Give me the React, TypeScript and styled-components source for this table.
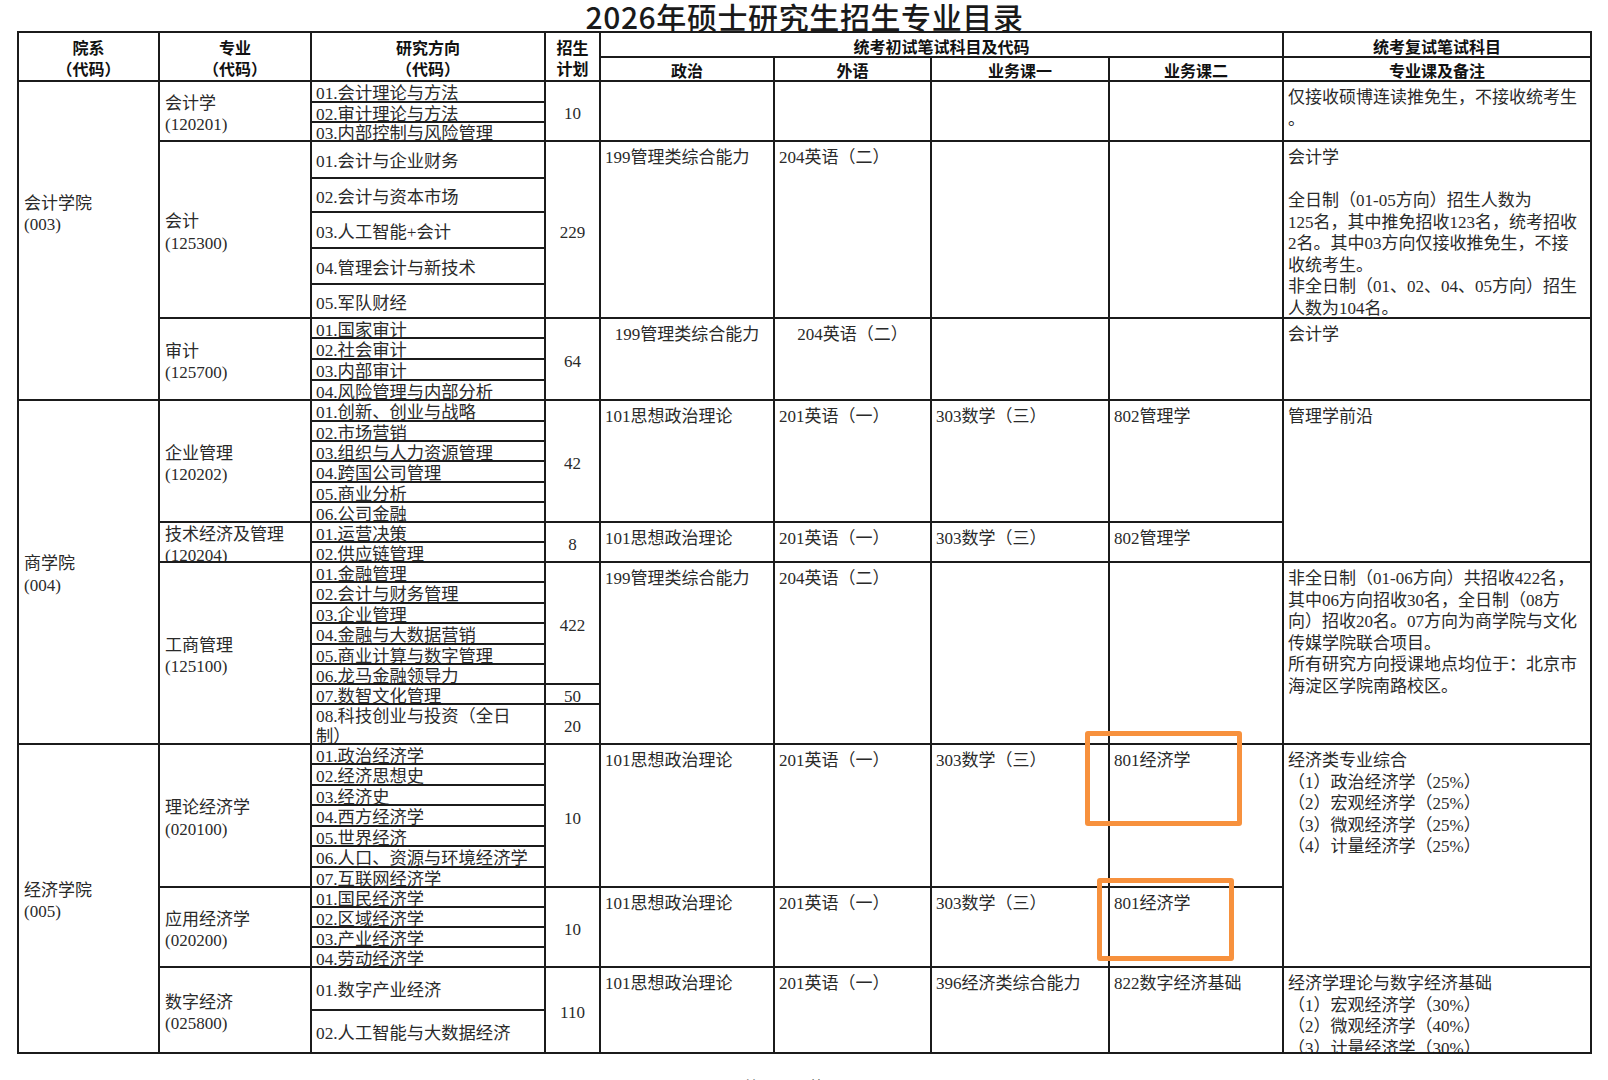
import React from 'react';
import styled, { createGlobalStyle } from 'styled-components';

const LINE = '#1b1b1b';
const TEXT = '#2a2a2a';
const COLS = [141, 152, 234, 55, 174, 157, 178, 174, 308];

const GlobalStyle = createGlobalStyle`
  html, body { margin: 0; padding: 0; background: #ffffff; }
  body {
    font-family: "Liberation Serif", "Noto Sans CJK SC", serif;
    color: ${TEXT};
    overflow: hidden;
  }
`;

type Dir = { text: string; h: number };
type Plan = { n: string; rows: number };
type Note = { lines: string[]; majors: number };
type Major = {
  name: string;
  code: string;
  dirs: Dir[];
  plans: Plan[];
  subjects: string[];
  subjectsCenter?: boolean;
  note?: Note;
};
type Dept = { name: string; code: string; lift?: number; majors: Major[] };

const d = (texts: string[], hs: number[]): Dir[] => texts.map((t, i) => ({ text: t, h: hs[i] }));

const MGMT = ['199管理类综合能力', '204英语（二）', '', ''];
const BIZ = ['101思想政治理论', '201英语（一）', '303数学（三）', '802管理学'];
const ECON = ['101思想政治理论', '201英语（一）', '303数学（三）', '801经济学'];

const DEPTS: Dept[] = [
  {
    name: '会计学院',
    code: '(003)',
    lift: 58,
    majors: [
      {
        name: '会计学',
        code: '(120201)',
        dirs: d(['01.会计理论与方法', '02.审计理论与方法', '03.内部控制与风险管理'], [21, 20, 19]),
        plans: [{ n: '10', rows: 3 }],
        subjects: ['', '', '', ''],
        note: { lines: ['仅接收硕博连读推免生，不接收统考生', '。'], majors: 1 },
      },
      {
        name: '会计',
        code: '(125300)',
        dirs: d(
          ['01.会计与企业财务', '02.会计与资本市场', '03.人工智能+会计', '04.管理会计与新技术', '05.军队财经'],
          [37, 34, 36, 36, 34]
        ),
        plans: [{ n: '229', rows: 5 }],
        subjects: MGMT,
        note: {
          lines: [
            '会计学',
            '',
            '全日制（01-05方向）招生人数为',
            '125名，其中推免招收123名，统考招收',
            '2名。其中03方向仅接收推免生，不接',
            '收统考生。',
            '非全日制（01、02、04、05方向）招生',
            '人数为104名。',
          ],
          majors: 1,
        },
      },
      {
        name: '审计',
        code: '(125700)',
        dirs: d(['01.国家审计', '02.社会审计', '03.内部审计', '04.风险管理与内部分析'], [20, 21, 21, 20]),
        plans: [{ n: '64', rows: 4 }],
        subjects: MGMT,
        subjectsCenter: true,
        note: { lines: ['会计学'], majors: 1 },
      },
    ],
  },
  {
    name: '商学院',
    code: '(004)',
    majors: [
      {
        name: '企业管理',
        code: '(120202)',
        dirs: d(
          ['01.创新、创业与战略', '02.市场营销', '03.组织与人力资源管理', '04.跨国公司管理', '05.商业分析', '06.公司金融'],
          [21, 20, 20, 21, 20, 20]
        ),
        plans: [{ n: '42', rows: 6 }],
        subjects: BIZ,
        note: { lines: ['管理学前沿'], majors: 2 },
      },
      {
        name: '技术经济及管理',
        code: '(120204)',
        dirs: d(['01.运营决策', '02.供应链管理'], [20, 20]),
        plans: [{ n: '8', rows: 2 }],
        subjects: BIZ,
      },
      {
        name: '工商管理',
        code: '(125100)',
        dirs: d(
          [
            '01.金融管理',
            '02.会计与财务管理',
            '03.企业管理',
            '04.金融与大数据营销',
            '05.商业计算与数字管理',
            '06.龙马金融领导力',
            '07.数智文化管理',
            '08.科技创业与投资（全日\n制）',
          ],
          [20, 21, 20, 21, 20, 20, 20, 40]
        ),
        plans: [
          { n: '422', rows: 6 },
          { n: '50', rows: 1 },
          { n: '20', rows: 1 },
        ],
        subjects: MGMT,
        note: {
          lines: [
            '非全日制（01-06方向）共招收422名，',
            '其中06方向招收30名，全日制（08方',
            '向）招收20名。07方向为商学院与文化',
            '传媒学院联合项目。',
            '所有研究方向授课地点均位于：北京市',
            '海淀区学院南路校区。',
          ],
          majors: 1,
        },
      },
    ],
  },
  {
    name: '经济学院',
    code: '(005)',
    majors: [
      {
        name: '理论经济学',
        code: '(020100)',
        dirs: d(
          ['01.政治经济学', '02.经济思想史', '03.经济史', '04.西方经济学', '05.世界经济', '06.人口、资源与环境经济学', '07.互联网经济学'],
          [20, 21, 20, 21, 20, 21, 20]
        ),
        plans: [{ n: '10', rows: 7 }],
        subjects: ECON,
        note: {
          lines: ['经济类专业综合', '（1）政治经济学（25%）', '（2）宏观经济学（25%）', '（3）微观经济学（25%）', '（4）计量经济学（25%）'],
          majors: 2,
        },
      },
      {
        name: '应用经济学',
        code: '(020200)',
        dirs: d(['01.国民经济学', '02.区域经济学', '03.产业经济学', '04.劳动经济学'], [20, 20, 20, 20]),
        plans: [{ n: '10', rows: 4 }],
        subjects: ECON,
      },
      {
        name: '数字经济',
        code: '(025800)',
        dirs: d(['01.数字产业经济', '02.人工智能与大数据经济'], [43, 43]),
        plans: [{ n: '110', rows: 2 }],
        subjects: ['101思想政治理论', '201英语（一）', '396经济类综合能力', '822数字经济基础'],
        note: {
          lines: ['经济学理论与数字经济基础', '（1）宏观经济学（30%）', '（2）微观经济学（40%）', '（3）计量经济学（30%）'],
          majors: 1,
        },
      },
    ],
  },
];

/* ---------- styled parts ---------- */

const Page = styled.div`
  position: relative;
  width: 1608px;
  height: 1080px;
  padding-left: 17px;
  box-sizing: border-box;
`;

const Title = styled.h1`
  width: 1575px;
  height: 31px;
  margin: 0;
  font-family: "Noto Sans CJK SC", sans-serif;
  font-weight: 500;
  font-size: 30px;
  line-height: 32px;
  letter-spacing: 0.6px;
  color: #1a1a1a;
  text-align: center;
  white-space: nowrap;
`;

const Grid = styled.div<{ $rows: string }>`
  display: grid;
  grid-template-columns: ${COLS.map((c) => `${c}px`).join(' ')};
  grid-template-rows: ${(p) => p.$rows};
  width: max-content;
  border-top: 2px solid ${LINE};
  border-left: 2px solid ${LINE};
`;

const Cell = styled.div<{ $c: number; $cs?: number; $r: number; $rs?: number }>`
  grid-column: ${(p) => p.$c} / span ${(p) => p.$cs ?? 1};
  grid-row: ${(p) => p.$r} / span ${(p) => p.$rs ?? 1};
  border-right: 2px solid ${LINE};
  border-bottom: 2px solid ${LINE};
  box-sizing: border-box;
  overflow: hidden;
  min-width: 0;
  min-height: 0;
  font-size: 17px;
`;

const HeadCell = styled(Cell)`
  display: flex;
  flex-direction: column;
  align-items: center;
  justify-content: center;
  padding-top: 3px;
  font-family: "Noto Sans CJK SC", sans-serif;
  font-weight: 700;
  font-size: 16px;
  line-height: 21px;
  color: #111;
  white-space: nowrap;
`;

const DeptCell = styled(Cell)<{ $lift?: number }>`
  display: flex;
  flex-direction: column;
  justify-content: center;
  padding: 5px 5px ${(p) => p.$lift ?? 0}px;
  line-height: 21.5px;
`;

const MajorCell = styled(Cell)`
  display: flex;
  flex-direction: column;
  justify-content: center;
  padding: 6px 5px 0;
  line-height: 21.5px;
  white-space: nowrap;
`;

const DirCell = styled(Cell)`
  display: flex;
  align-items: center;
  padding: 5px 4px 0;
  line-height: 20px;
  font-size: 17.3px;
  white-space: pre-line;
`;

const PlanCell = styled(Cell)`
  display: flex;
  align-items: center;
  justify-content: center;
  padding-top: 6px;
  line-height: 20px;
`;

const SubjectCell = styled(Cell)<{ $center?: boolean }>`
  padding: 5px 4px 0;
  line-height: 21.5px;
  white-space: nowrap;
  text-align: ${(p) => (p.$center ? 'center' : 'left')};
`;

const NoteCell = styled(Cell)`
  padding: 5px 4px 0;
  line-height: 21.5px;
`;

const NoteLine = styled.div`
  min-height: 21.5px;
  white-space: nowrap;
`;

const Mark = styled.div<{ $x: number; $y: number; $w: number; $h: number }>`
  position: absolute;
  left: ${(p) => p.$x}px;
  top: ${(p) => p.$y}px;
  width: ${(p) => p.$w}px;
  height: ${(p) => p.$h}px;
  border: 5px solid #f7913d;
  border-radius: 3px;
  box-sizing: border-box;
  pointer-events: none;
`;

const Footer = styled.div`
  width: 1575px;
  margin-top: 20px;
  text-align: center;
  font-family: "Noto Sans CJK SC", sans-serif;
  font-size: 16px;
  color: #444;
`;

/* ---------- build ---------- */

function buildTable() {
  const cells: React.ReactNode[] = [];
  const heights: number[] = [25, 24];

  const heads: [string[], number, number, number, number][] = [
    [['院系', '（代码）'], 1, 1, 1, 2],
    [['专业', '（代码）'], 2, 1, 1, 2],
    [['研究方向', '（代码）'], 3, 1, 1, 2],
    [['招生', '计划'], 4, 1, 1, 2],
    [['统考初试笔试科目及代码'], 5, 4, 1, 1],
    [['统考复试笔试科目'], 9, 1, 1, 1],
    [['政治'], 5, 1, 2, 1],
    [['外语'], 6, 1, 2, 1],
    [['业务课一'], 7, 1, 2, 1],
    [['业务课二'], 8, 1, 2, 1],
    [['专业课及备注'], 9, 1, 2, 1],
  ];
  heads.forEach(([lines, c, cs, r, rs], i) => {
    cells.push(
      <HeadCell key={`h${i}`} $c={c} $cs={cs} $r={r} $rs={rs}>
        {lines.map((l) => (
          <span key={l}>{l}</span>
        ))}
      </HeadCell>
    );
  });

  let row = 3;
  DEPTS.forEach((dept, di) => {
    const deptRows = dept.majors.reduce((s, m) => s + m.dirs.length, 0);
    cells.push(
      <DeptCell key={`d${di}`} $c={1} $r={row} $rs={deptRows} $lift={dept.lift}>
        <span>{dept.name}</span>
        <span>{dept.code}</span>
      </DeptCell>
    );
    dept.majors.forEach((m, mi) => {
      const start = row;
      const n = m.dirs.length;
      const k = `${di}-${mi}`;
      cells.push(
        <MajorCell key={`m${k}`} $c={2} $r={start} $rs={n}>
          <span>{m.name}</span>
          <span>{m.code}</span>
        </MajorCell>
      );
      m.dirs.forEach((dir, i) => {
        heights.push(dir.h);
        cells.push(
          <DirCell key={`r${k}-${i}`} $c={3} $r={start + i}>
            {dir.text}
          </DirCell>
        );
      });
      let pr = start;
      m.plans.forEach((p, pi) => {
        cells.push(
          <PlanCell key={`p${k}-${pi}`} $c={4} $r={pr} $rs={p.rows}>
            {p.n}
          </PlanCell>
        );
        pr += p.rows;
      });
      m.subjects.forEach((s, si) => {
        cells.push(
          <SubjectCell key={`s${k}-${si}`} $c={5 + si} $r={start} $rs={n} $center={m.subjectsCenter}>
            {s}
          </SubjectCell>
        );
      });
      if (m.note) {
        const span = dept.majors
          .slice(mi, mi + m.note.majors)
          .reduce((s, mm) => s + mm.dirs.length, 0);
        cells.push(
          <NoteCell key={`n${k}`} $c={9} $r={start} $rs={span}>
            {m.note.lines.map((l, li) => (
              <NoteLine key={li}>{l || '\u00a0'}</NoteLine>
            ))}
          </NoteCell>
        );
      }
      row += n;
    });
  });

  return { cells, rows: heights.map((h) => `${h}px`).join(' ') };
}

export default function App() {
  const { cells, rows } = buildTable();
  return (
    <>
      <GlobalStyle />
      <Page>
        <Title>2026年硕士研究生招生专业目录</Title>
        <Grid $rows={rows}>{cells}</Grid>
        <Footer>第 2 页，共 12 页</Footer>
        <Mark $x={1085} $y={731} $w={157} $h={95} />
        <Mark $x={1097} $y={878} $w={137} $h={83} />
      </Page>
    </>
  );
}
